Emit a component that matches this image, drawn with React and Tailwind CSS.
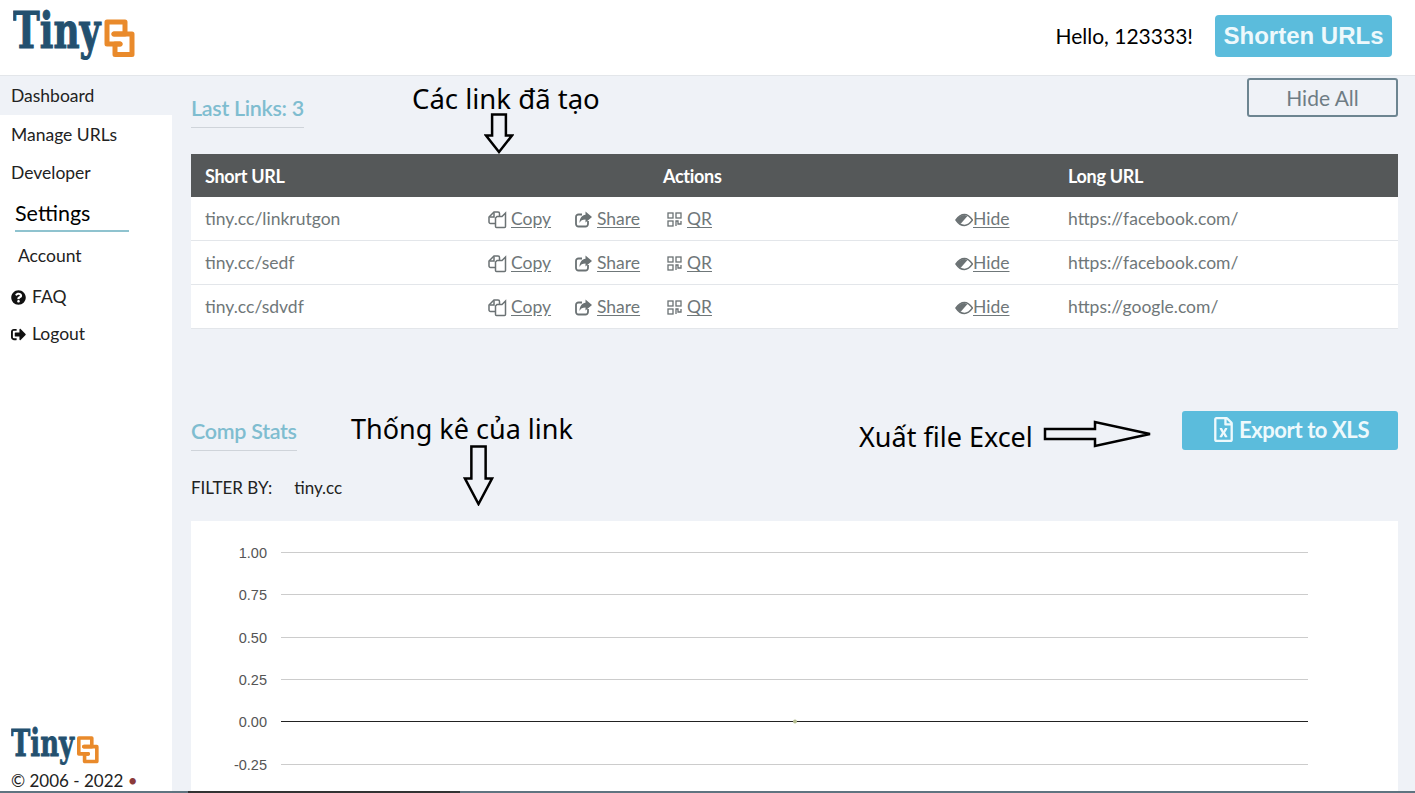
import { FaQuestionCircle, FaSignOutAlt, FaRegFileExcel } from 'react-icons/fa'

const LINKS = [
  { short: 'tiny.cc/linkrutgon', long: 'https://facebook.com/' },
  { short: 'tiny.cc/sedf', long: 'https://facebook.com/' },
  { short: 'tiny.cc/sdvdf', long: 'https://google.com/' },
]

const TICKS = [
  { label: '1.00', y: 31 },
  { label: '0.75', y: 73 },
  { label: '0.50', y: 116 },
  { label: '0.25', y: 158 },
  { label: '0.00', y: 200, zero: true },
  { label: '-0.25', y: 243 },
]

function Logo({ width, height }) {
  return (
    <svg width={width} height={height} viewBox="0 0 122 62">
      <text
        transform="translate(0 47.5) scale(0.705 1)"
        fontFamily="DejaVu Serif"
        fontWeight="700"
        fontSize="51"
        fill="#23506f"
        stroke="#23506f"
        strokeWidth="1.2"
      >
        Tiny
      </text>
      <g fill="none" stroke="#e98a2b" strokeWidth="5" strokeLinejoin="round" strokeLinecap="round">
        <path d="M107 44 H94 V22 H112 V34 H101" />
        <path d="M101 34 H119 V54.5 H102 V44 H107" />
      </g>
    </svg>
  )
}

function CopyIcon() {
  return (
    <svg width="19" height="18" viewBox="0 0 19 18" fill="none" stroke="#6b7274" strokeWidth="1.5">
      <path d="M7 12.5 H2.5 A1.5 1.5 0 0 1 1 11 V6 L6 1 H10 A1.5 1.5 0 0 1 11.5 2.5 V5" />
      <path d="M6 1.5 V6 H1.5" />
      <path d="M9 5.5 L14 5.5 L17.5 2 V15.5 A1 1 0 0 1 16.5 16.5 H8.5 A1 1 0 0 1 7.5 15.5 V7 Z" />
    </svg>
  )
}

function ShareIcon() {
  return (
    <svg width="18" height="17" viewBox="0 0 18 17">
      <path d="M13 10 V13 A2.5 2.5 0 0 1 10.5 15.5 H3.5 A2.5 2.5 0 0 1 1 13 V6 A2.5 2.5 0 0 1 3.5 3.5 H7" fill="none" stroke="#6b7274" strokeWidth="1.8" />
      <path d="M10.5 0.5 L17 6 L10.5 11.5 V8.5 C7.5 8.5 5.5 9.5 4.5 12 C4.5 7.5 7 4 10.5 3.8 Z" fill="#6b7274" />
    </svg>
  )
}

function QrIcon() {
  return (
    <svg width="15" height="15" viewBox="0 0 15 15" fill="none" stroke="#6b7274" strokeWidth="1.3">
      <rect x="1" y="1" width="5" height="5" />
      <rect x="9" y="1" width="5" height="5" />
      <rect x="1" y="9" width="5" height="5" />
      <path d="M9 14 V9 H11 V12 H14 V9" />
    </svg>
  )
}

function HideIcon() {
  return (
    <svg width="18" height="14" viewBox="0 0 18 14">
      <path d="M1 7 C4 2.5 7 1.5 9.5 1.5 C12.5 1.5 15 3.5 17.5 7 C15 10.5 12.5 12.5 9.5 12.5 C7 12.5 4 11.5 1 7 Z" fill="none" stroke="#6b7274" strokeWidth="1.5" />
      <path d="M1.5 7 C3.5 4 6 2 9.5 2 L12.5 3 L5.5 11 C4 10 2.8 8.8 1.5 7 Z" fill="#6b7274" />
    </svg>
  )
}

function ActionLink({ icon, label, gap = 'gap-[4px]' }) {
  return (
    <a className={`flex items-center ${gap} text-[#6f7779]`}>
      {icon}
      <span className="underline underline-offset-2">{label}</span>
    </a>
  )
}

function DownArrow({ className, w, h }) {
  return (
    <svg className={`absolute ${className}`} width={w} height={h} viewBox={`0 0 ${w} ${h}`} fill="#eff2f7" stroke="#000" strokeWidth="2.5">
      <path d={`M${w * 0.27} 1.5 H${w * 0.73} V${h * 0.55} H${w - 2} L${w / 2} ${h - 2} L2 ${h * 0.55} H${w * 0.27} Z`} />
    </svg>
  )
}

function SideItem({ children, active, height }) {
  return (
    <a className={`flex items-center px-[11px] pt-[2px] text-[17.5px] text-[#222] ${height} ${active ? 'bg-[#eff2f7]' : ''}`}>
      {children}
    </a>
  )
}

function SectionTitle({ children }) {
  return (
    <h2 className="inline-block border-b border-[#cfd4da] pb-1 text-[21.5px] leading-[30px] font-semibold tracking-[-0.3px] text-[#7fbdd0]">
      {children}
    </h2>
  )
}

export default function App() {
  return (
    <div className='relative flex h-[793px] w-[1415px] flex-col overflow-hidden bg-white font-["Lato","Noto_Sans",sans-serif]'>
      {/* header */}
      <header className="flex h-[76px] shrink-0 items-center justify-between border-b border-[#e3e6ea] pr-[23px] pl-[13px]">
        <div className="self-start">
          <Logo width={122} height={62} />
        </div>
        <div className="-mt-[3px] flex items-center gap-[22px]">
          <span className="text-[21px] text-black">Hello, 123333!</span>
          <a className='flex h-[42px] w-[177px] items-center justify-center rounded-[4px] bg-[#5bbcdc] font-["Liberation_Sans",sans-serif] text-[24px] font-bold text-[#eef9fc]'>
            Shorten URLs
          </a>
        </div>
      </header>

      <div className="flex min-h-0 flex-1">
        {/* sidebar */}
        <aside className="flex w-[172px] shrink-0 flex-col">
          <SideItem active height="h-[39px]">Dashboard</SideItem>
          <SideItem height="h-[39px]">Manage URLs</SideItem>
          <SideItem height="h-[37px]">Developer</SideItem>
          <div className="mt-[7px] ml-[15px] w-[114px] border-b-2 border-[#8fc3cf] pb-[2px] text-[21.5px] leading-[30px] text-black">Settings</div>
          <a className="mt-[11px] pl-[18px] text-[17.5px] leading-[26px] text-[#222]">Account</a>
          <a className="mt-[15px] flex items-center gap-[6px] pl-[11px] text-[17.5px] leading-[26px] text-[#222]">
            <FaQuestionCircle size={15} color="#111" />
            FAQ
          </a>
          <a className="mt-[11px] flex items-center gap-[6px] pl-[11px] text-[17.5px] leading-[26px] text-[#222]">
            <FaSignOutAlt size={15} color="#111" />
            Logout
          </a>
          <div className="mt-auto pb-[1px] pl-[11px]">
            <Logo width={88} height={45} />
            <p className="mt-[2px] text-[17px] leading-[23px] text-[#222]">
              © 2006 - 2022 <span className="text-[#8b3a3a]">•</span>
            </p>
          </div>
        </aside>

        {/* main */}
        <main className="min-w-0 flex-1 bg-[#eff2f7] pr-[17px] pl-[19px]">
          <div className="flex items-start justify-between">
            <div className="pt-[17px]">
              <SectionTitle>Last Links: 3</SectionTitle>
            </div>
            <a className="mt-[2px] flex h-[39px] w-[151px] items-center justify-center rounded-[3px] border-2 border-[#6d8591] text-[21px] text-[#6f7d85]">
              Hide All
            </a>
          </div>

          <div className="mt-[26px] bg-white text-[17.5px]">
            <div className="grid h-[43px] grid-cols-[458px_405px_1fr] items-center bg-[#555859] pt-[2px] pl-[14px] text-[18px] font-bold tracking-[-0.3px] text-white">
              <span>Short URL</span>
              <span>Actions</span>
              <span>Long URL</span>
            </div>
            {LINKS.map((link) => (
              <div
                key={link.short}
                className="grid h-[44px] grid-cols-[283px_87px_92px_288px_113px_1fr] items-center border-b border-[#e3e6ea] pt-[2px] pl-[14px] text-[#6f7779]"
              >
                <span>{link.short}</span>
                <ActionLink icon={<CopyIcon />} label="Copy" />
                <ActionLink icon={<ShareIcon />} label="Share" />
                <ActionLink icon={<QrIcon />} label="QR" gap="gap-[5px]" />
                <ActionLink icon={<HideIcon />} label="Hide" gap="gap-0" />
                <span>{link.long}</span>
              </div>
            ))}
          </div>

          <div className="mt-[82px] flex items-start justify-between">
            <div className="pt-[5px]">
              <SectionTitle>Comp Stats</SectionTitle>
            </div>
            <a className="flex h-[39px] w-[216px] items-center justify-center gap-[3px] rounded-[3px] bg-[#5bbcdc] pb-[2px] text-[22px] font-bold tracking-[-0.4px] text-[#eef9fc]">
              <FaRegFileExcel size={25} />
              Export to XLS
            </a>
          </div>

          <div className="mt-[26px] flex gap-[22px] text-[17px] leading-[22px] text-[#222]">
            <span>FILTER BY:</span>
            <span>tiny.cc</span>
          </div>

          <div className="mt-[22px] h-[300px] bg-white">
            <svg width="1207" height="300" viewBox="0 0 1207 300">
              {TICKS.map((tick) => (
                <g key={tick.label}>
                  <line x1="90" x2="1117" y1={tick.y + 0.5} y2={tick.y + 0.5} stroke={tick.zero ? '#222' : '#ccc'} />
                  <text x="76" y={tick.y + 6} textAnchor="end" fontFamily="Liberation Sans" fontSize="14.5" fill="#555">
                    {tick.label}
                  </text>
                </g>
              ))}
              <circle cx="604" cy="200.5" r="2" fill="#b5bd8f" />
            </svg>
          </div>
        </main>
      </div>

      {/* cropped row at the bottom edge */}
      <div className="absolute right-0 bottom-0 left-0 h-[2px] bg-[#5f7480]" />
      <div className="absolute bottom-0 left-[188px] h-[2px] w-[272px] bg-[#333]" />

      {/* annotations over the page */}
      <span className='absolute top-[80px] left-[412px] font-["Noto_Sans",sans-serif] text-[27.5px] leading-[38px] text-black'>Các link đã tạo</span>
      <DownArrow className="top-[113px] left-[484px]" w={30} h={41} />
      <span className='absolute top-[409px] left-[351px] font-["Noto_Sans",sans-serif] text-[27px] leading-[40px] text-black'>Thống kê của link</span>
      <DownArrow className="top-[445px] left-[463px]" w={31} h={61} />
      <span className='absolute top-[418px] left-[859px] font-["Noto_Sans",sans-serif] text-[27px] leading-[38px] text-black'>Xuất file Excel</span>
      <svg className="absolute top-[420px] left-[1043px]" width="110" height="28" viewBox="0 0 110 28" fill="#eff2f7" stroke="#000" strokeWidth="2.5">
        <path d="M2 9 H52 V2 L107 14 L52 26 V19 H2 Z" />
      </svg>
    </div>
  )
}
